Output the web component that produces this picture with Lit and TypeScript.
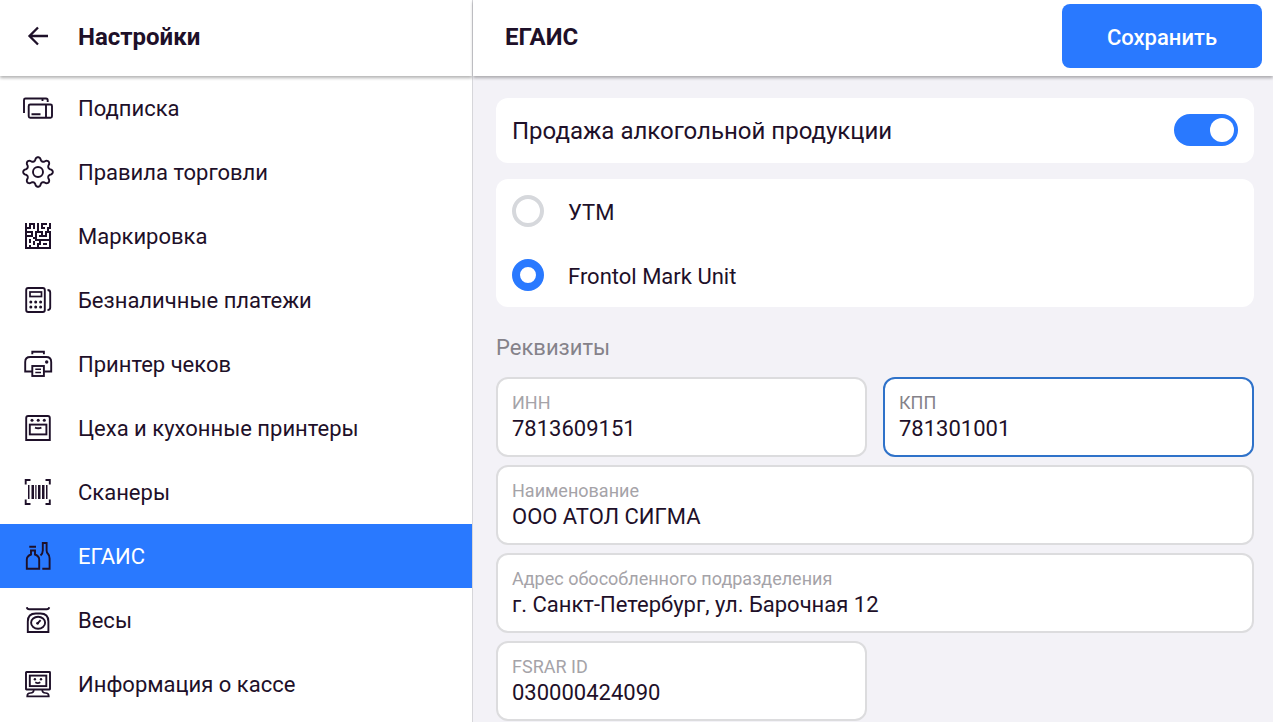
import { LitElement, html, svg, css, nothing, type SVGTemplateResult } from "lit";
import { customElement, property, state } from "lit/decorators.js";
import { classMap } from "lit/directives/class-map.js";

const gearPath = (): string => {
  const points: string[] = [];
  const steps = 144;
  for (let i = 0; i < steps; i++) {
    const a = (i / steps) * Math.PI * 2;
    const wave = Math.cos(8 * a);
    const r = 13 + 1.8 * Math.sign(wave) * Math.pow(Math.abs(wave), 0.7);
    points.push(`${(16 + r * Math.cos(a)).toFixed(2)} ${(16 + r * Math.sin(a)).toFixed(2)}`);
  }
  return `M${points.join("L")}Z`;
};

// Data matrix modules, 13 x 13
const MATRIX = [
  "1011101011101",
  "1010101010001",
  "1110101011011",
  "1000001000010",
  "1111011110111",
  "1001010010101",
  "1111010111101",
  "1000110000001",
  "1010011111111",
  "1010100100001",
  "1000101101101",
  "1010001000001",
  "1111111111111",
];

const matrixPath = MATRIX.flatMap((row, y) =>
  [...row].map((c, x) => (c === "1" ? `M${3 + x * 2} ${3 + y * 2}h2v2h-2z` : "")),
).join("");

const ICONS: Record<string, SVGTemplateResult> = {
  back: svg`<path d="M26 16H8M16 7.5L7.500 16l8.500 8.500" stroke-width="2.300"/>`,
  cards: svg`<path d="M2 21V8q0-1.500 1.500-1.500H24q1.700 0 1.700 1.700V10M20.500 6.500V9"/>
    <rect x="6.700" y="12.500" width="23.300" height="13.200" rx="1.500"/><path d="M24 12.500v13.200M9.500 22.200h9"/>`,
  gear: svg`<path d=${gearPath()}/><circle cx="16" cy="16" r="5"/>`,
  matrix: svg`<path class="solid" d=${matrixPath}/>`,
  terminal: svg`<rect x="4.200" y="4" width="18.600" height="24" rx="2"/><rect x="8" y="8" width="11.500" height="4.500" stroke-width="1.700"/>
    <path d="M25.500 6q2.700 0 2.700 2.500v15q0 2.500-2.700 2.500"/>
    <g class="solid"><circle cx="8.800" cy="18" r="1.500"/><circle cx="13.700" cy="18" r="1.500"/><circle cx="18.600" cy="18" r="1.500"/>
    <circle cx="8.800" cy="23" r="1.500"/><circle cx="13.700" cy="23" r="1.500"/><circle cx="18.600" cy="23" r="1.500"/></g>`,
  printer: svg`<path d="M10.300 6.200V3.700h11.600v2.500M10 23.500H3.200V14q0-5 5-5h16q5 0 5 5v9.500h-7"/>
    <rect x="10.300" y="18" width="11.600" height="10"/><path d="M13.300 21.300h5.700M13.300 24.500h5.700" stroke-width="1.600"/>
    <circle class="solid" cx="24.700" cy="14" r="1.700"/>`,
  oven: svg`<path d="M4.200 28V6q0-2 2-2h19.600q2 0 2 2v22z"/><rect x="7.800" y="12.600" width="16.600" height="9.800"/><path d="M13 15.600q3.200 1.200 6.400 0"/>
    <g class="solid"><circle cx="10" cy="8.200" r="1.500"/><circle cx="16.200" cy="8.200" r="1.500"/><circle cx="22.300" cy="8.200" r="1.500"/></g>`,
  scanner: svg`<path d="M3.700 8.500V4H8.500M23.500 4h4.300v4.500M27.800 23.500V28h-4.300M8.500 28H3.700v-4.500"/>
    <g class="solid"><path d="M6 9h1.500v14H6zM9.500 9h2.500v14H9.500zM13.300 9h1.200v14h-1.200zM16 9h2.500v14H16zM20 9h2.500v14H20zM24 9h1.500v14H24z"/></g>`,
  bottles: svg`<path d="M7.300 6.800h6.700M9 10.500h4v4q4.200 1.700 4.200 5v9.300H4.800v-9.300q0-3.300 4.200-5zM18.500 15.500q2.300-2 2.300-5V3H24.600v7.500q0 2 1.500 3.500t1.500 4.500v10.300h-7.300"/>`,
  scales: svg`<path d="M4.800 3.200q.4 2 2.400 2h17.600q2 0 2.400-2M5.800 28V17.500q0-8 8-8h4.600q8 0 8 8V28z"/>
    <ellipse cx="16.100" cy="18.700" rx="7" ry="6"/><path d="M15.300 19.700l3.300-3.500"/><circle class="solid" cx="15.600" cy="19.300" r="1.400"/>`,
  monitor: svg`<rect x="4" y="4" width="24" height="17.500" rx=".5"/><rect x="7.800" y="7.600" width="16.500" height="10.500"/>
    <path d="M11.800 21.500q0 3.500-3.300 3.500-3.300 0-3.300 3.300h21.600q0-3.300-3.300-3.300t-3.300-3.500M13.300 14.300q2.500 1.500 5 0" stroke-width="1.700"/>
    <g class="solid"><circle cx="12.900" cy="11.300" r="1.200"/><circle cx="19" cy="11.300" r="1.200"/></g>`,
};

@customElement("ui-icon")
export class UiIcon extends LitElement {
  @property() name = "";

  static styles = css`
    :host { display: block; flex: none; width: 32px; height: 32px; }
    .icon { display: block; width: 100%; height: 100%; fill: none; stroke: #1e1029; stroke-width: 1.9; }
    .solid { fill: #1e1029; stroke: none; }
  `;

  render() {
    return html`<svg class="icon" viewBox="0 0 32 32" aria-hidden="true">${ICONS[this.name] ?? nothing}</svg>`;
  }
}

interface Field {
  id: string;
  label: string;
  value: string;
  wide?: boolean;
}

const SECTIONS = [
  { icon: "cards", title: "Подписка" },
  { icon: "gear", title: "Правила торговли" },
  { icon: "matrix", title: "Маркировка" },
  { icon: "terminal", title: "Безналичные платежи" },
  { icon: "printer", title: "Принтер чеков" },
  { icon: "oven", title: "Цеха и кухонные принтеры" },
  { icon: "scanner", title: "Сканеры" },
  { icon: "bottles", title: "ЕГАИС" },
  { icon: "scales", title: "Весы" },
  { icon: "monitor", title: "Информация о кассе" },
];

const FIELDS: Field[] = [
  { id: "inn", label: "ИНН", value: "7813609151" },
  { id: "kpp", label: "КПП", value: "781301001" },
  { id: "name", label: "Наименование", value: "ООО АТОЛ СИГМА", wide: true },
  { id: "address", label: "Адрес обособленного подразделения", value: "г. Санкт-Петербург, ул. Барочная 12", wide: true },
  { id: "fsrar", label: "FSRAR ID", value: "030000424090" },
];

@customElement("app-root")
export class AppRoot extends LitElement {
  @state() private section = "ЕГАИС";
  @state() private active = "kpp";
  @state() private mode = "Frontol Mark Unit";

  static styles = css`
    :host {
      display: grid;
      grid-template-columns: 472px minmax(0, 1fr);
      min-height: 100vh;
      background: #fff;
      color: #1e1029;
      font: 22px/32px Roboto, sans-serif;
    }
    *, *::before { box-sizing: border-box; }
    .header {
      display: flex;
      align-items: center;
      height: 76px;
      padding-bottom: 4px;
      background: #fff;
      box-shadow: 0 2px 3px rgba(0, 0, 0, 0.3);
    }
    .sidebar .header { padding-left: 22px; gap: 24px; }
    .back { display: block; padding: 0; border: 0; background: none; cursor: pointer; }
    .title { margin: 0; padding-top: 2px; font-size: 24px; font-weight: 700; }
    .list { margin: 0; padding: 0; list-style: none; }
    .link {
      display: flex;
      align-items: center;
      gap: 24px;
      height: 64px;
      padding: 0 22px;
      color: inherit;
      text-decoration: none;
    }
    .text { padding-top: 2px; }
    .link.current { background: #2979ff; color: #fff; }
    .main { border-left: 1px solid #d6d6da; background: #f3f2f7; }
    .main .header { justify-content: space-between; padding-right: 11px; padding-left: 32px; }
    .save {
      width: 200px;
      height: 64px;
      padding: 4px 0 0;
      border: 0;
      border-radius: 8px;
      background: #2979ff;
      color: #fff;
      font: 500 22px/32px Roboto, sans-serif;
      cursor: pointer;
    }
    .content { padding: 22px 19px 0 23px; }
    .card { margin-bottom: 16px; border-radius: 12px; background: #fff; }
    .switch-row {
      display: flex;
      align-items: center;
      justify-content: space-between;
      height: 65px;
      padding: 0 16px 1px;
      font-size: 24px;
    }
    .switch {
      appearance: none;
      width: 64px;
      height: 32px;
      margin: 0;
      padding: 4px;
      border-radius: 16px;
      background: #d3d5d9;
    }
    .switch::before {
      content: "";
      display: block;
      width: 24px;
      height: 24px;
      border-radius: 50%;
      background: #fff;
    }
    .switch:checked { background: #2979ff; }
    .switch:checked::before { margin-left: auto; }
    .option { display: flex; align-items: center; gap: 24px; height: 64px; padding: 0 16px; }
    .option .text { padding-top: 4px; }
    .radio {
      appearance: none;
      width: 32px;
      height: 32px;
      margin: 0;
      border: 4px solid #d6d8dc;
      border-radius: 50%;
      background: #fff;
    }
    .radio:checked { border: 8px solid #2979ff; }
    .caption { margin: 25px 0 13px; color: #85828a; font-size: 22px; font-weight: 400; }
    .fields { display: grid; grid-template-columns: 1fr 1fr; gap: 8px 16px; }
    .field {
      display: flex;
      flex-direction: column;
      height: 80px;
      padding: 12px 14px;
      border: 2px solid #dcdcde;
      border-radius: 12px;
      background: #fff;
      color: #a5a3a8;
      font-size: 18px;
      line-height: 24px;
    }
    .field.wide { grid-column: 1 / -1; }
    .field.active { border-color: #2f72c9; color: #858289; }
    .input {
      width: 100%;
      height: 28px;
      padding: 0;
      border: 0;
      outline: 0;
      background: none;
      color: #1e1029;
      font: 22px/28px Roboto, sans-serif;
    }
  `;

  render() {
    return html`
      <nav class="sidebar">
        <header class="header">
          <button class="back" aria-label="Назад"><ui-icon name="back"></ui-icon></button>
          <h1 class="title">Настройки</h1>
        </header>
        <ul class="list">
          ${SECTIONS.map(
            (s) => html`<li>
              <a
                href="#"
                class=${classMap({ link: true, current: s.title === this.section })}
                @click=${(e: Event) => {
                  e.preventDefault();
                  this.section = s.title;
                }}
                ><ui-icon name=${s.icon}></ui-icon><span class="text">${s.title}</span></a
              >
            </li>`,
          )}
        </ul>
      </nav>
      <main class="main">
        <header class="header">
          <h2 class="title">ЕГАИС</h2>
          <button class="save">Сохранить</button>
        </header>
        <div class="content">
          <label class="card switch-row">
            <span class="text">Продажа алкогольной продукции</span>
            <input class="switch" type="checkbox" role="switch" checked />
          </label>
          <div class="card" role="radiogroup">
            ${["УТМ", "Frontol Mark Unit"].map(
              (m) => html`<label class="option">
                <input class="radio" type="radio" name="mode" .checked=${m === this.mode} @change=${() => (this.mode = m)} />
                <span class="text">${m}</span>
              </label>`,
            )}
          </div>
          <h3 class="caption">Реквизиты</h3>
          <div class="fields">
            ${FIELDS.map(
              (f) => html`<label class=${classMap({ field: true, wide: !!f.wide, active: f.id === this.active })}>
                <span>${f.label}</span>
                <input class="input" type="text" name=${f.id} .value=${f.value} @focus=${() => (this.active = f.id)} />
              </label>`,
            )}
          </div>
        </div>
      </main>
    `;
  }
}
